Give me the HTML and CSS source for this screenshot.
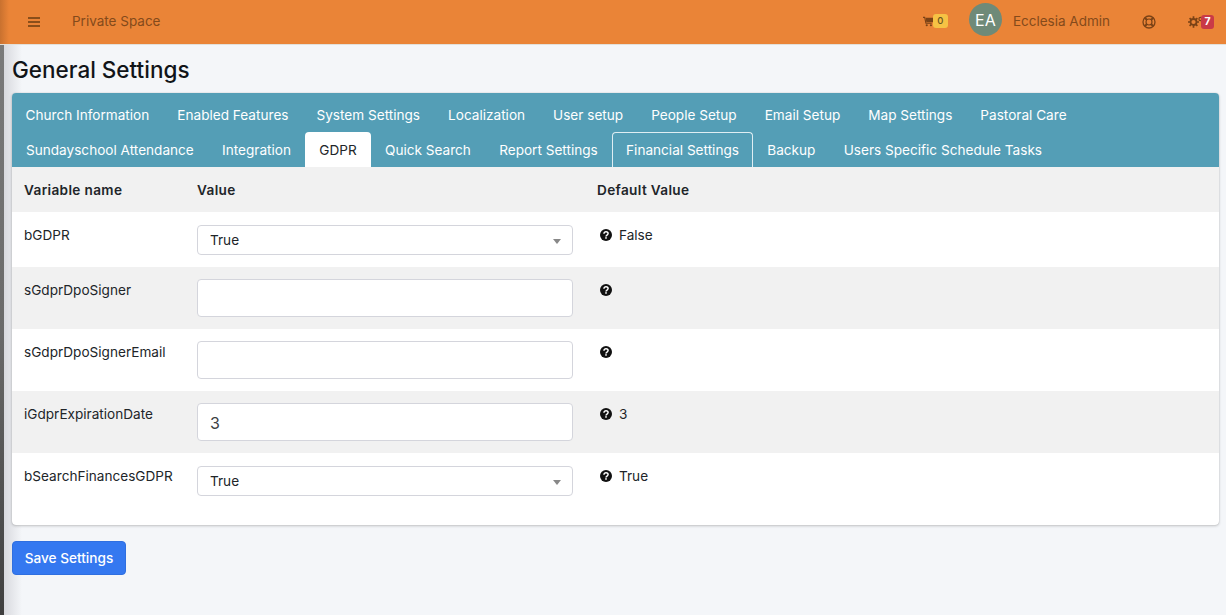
FILE: index.html
```html
<!DOCTYPE html>
<html lang="en">
<head>
<meta charset="utf-8">
<title>General Settings</title>
<link rel="stylesheet" href="styles.css">
</head>
<body>
<div class="sidebar-edge"></div>
<div class="page">
  <header class="topbar">
    <svg class="burger" viewBox="0 0 12 10" width="12" height="10"><path d="M0 1h12M0 5h12M0 9h12" stroke="#6b3d12" stroke-width="1.5"/></svg>
    <span class="space">Private Space</span>
    <div class="top-right">
      <span class="cart">
        <svg viewBox="0 0 12 12" width="10" height="11"><path d="M0 1h2l1.500 7h7" fill="none" stroke="#7a4216" stroke-width="1.300"/><path d="M3 1.500h9v5.500H4z" fill="#7a4216"/><circle cx="4.500" cy="10.500" r="1.300" fill="#7a4216"/><circle cx="9.500" cy="10.500" r="1.300" fill="#7a4216"/></svg>
        <span class="badge badge-yellow">0</span>
      </span>
      <span class="avatar">EA</span>
      <span class="user">Ecclesia Admin</span>
      <svg class="lifering" viewBox="0 0 14 14" width="14" height="14"><circle cx="7" cy="7" r="6" fill="none" stroke="#7a4216" stroke-width="1.300"/><circle cx="7" cy="7" r="3" fill="none" stroke="#7a4216" stroke-width="1.200"/><path d="M2.800 2.800l2.200 2.200M11.200 2.800L9 5M2.800 11.200L5 9M11.200 11.200L9 9" stroke="#7a4216" stroke-width="2"/></svg>
      <span class="gears">
        <svg viewBox="0 0 15 12" width="15" height="12"><circle cx="5.500" cy="6" r="3" fill="none" stroke="#7a4216" stroke-width="1.800"/><path d="M5.500 0.300v2M5.500 9.700v2M0 6h2M9 6h2M1.600 2.100l1.500 1.500M7.900 8.400l1.500 1.500M1.600 9.900l1.500-1.500M7.900 3.600l1.500-1.500" stroke="#7a4216" stroke-width="1.700"/><circle cx="12.500" cy="3" r="1.600" fill="none" stroke="#7a4216" stroke-width="1.200"/></svg>
        <span class="badge badge-red">7</span>
      </span>
    </div>
  </header>
  <main class="content">
    <h1 class="title">General Settings</h1>
    <section class="card">
      <nav class="tabs">
        <div class="tab-row first">
          <a class="tab">Church Information</a>
          <a class="tab">Enabled Features</a>
          <a class="tab">System Settings</a>
          <a class="tab">Localization</a>
          <a class="tab">User setup</a>
          <a class="tab">People Setup</a>
          <a class="tab">Email Setup</a>
          <a class="tab">Map Settings</a>
          <a class="tab">Pastoral Care</a>
        </div>
        <div class="tab-row second">
          <a class="tab">Sundayschool Attendance</a>
          <a class="tab">Integration</a>
          <a class="tab active">GDPR</a>
          <a class="tab">Quick Search</a>
          <a class="tab">Report Settings</a>
          <a class="tab outlined">Financial Settings</a>
          <a class="tab">Backup</a>
          <a class="tab">Users Specific Schedule Tasks</a>
        </div>
      </nav>
      <div class="row head">
        <div>Variable name</div>
        <div>Value</div>
        <div>Default Value</div>
      </div>
      <div class="row r-select">
        <div class="name">bGDPR</div>
        <div><div class="select">True<span class="caret"></span></div></div>
        <div class="def"><svg class="help"><use href="#q"/></svg>False</div>
      </div>
      <div class="row shaded r-input">
        <div class="name">sGdprDpoSigner</div>
        <div><div class="input"></div></div>
        <div class="def"><svg class="help"><use href="#q"/></svg></div>
      </div>
      <div class="row r-input">
        <div class="name">sGdprDpoSignerEmail</div>
        <div><div class="input"></div></div>
        <div class="def"><svg class="help"><use href="#q"/></svg></div>
      </div>
      <div class="row shaded r-input">
        <div class="name">iGdprExpirationDate</div>
        <div><div class="input">3</div></div>
        <div class="def"><svg class="help"><use href="#q"/></svg>3</div>
      </div>
      <div class="row r-select last">
        <div class="name">bSearchFinancesGDPR</div>
        <div><div class="select">True<span class="caret"></span></div></div>
        <div class="def"><svg class="help"><use href="#q"/></svg>True</div>
      </div>
    </section>
    <button class="save">Save Settings</button>
  </main>
</div>
<svg class="defs" width="0" height="0"><symbol id="q" viewBox="0 0 12 12"><circle cx="6" cy="6" r="6" fill="#111"/><path d="M4 4.700C4 3.500 4.900 2.800 6 2.800s2.100.7 2.100 1.800c0 1.500-2.100 1.500-2.100 2.800" fill="none" stroke="#fff" stroke-width="1.500"/><rect x="5.200" y="8.200" width="1.600" height="1.500" fill="#fff"/></symbol></svg>
</body>
</html>
```
FILE: styles.css
```css
* { box-sizing: border-box; }
html, body { margin: 0; height: 100%; }
body {
  width: 1226px;
  height: 615px;
  overflow: hidden;
  background: #f4f6f9;
  font-family: Inter, "Liberation Sans", sans-serif;
  font-size: 13.600px;
  color: #212529;
  position: relative;
}
.sidebar-edge {
  position: absolute;
  left: 0;
  top: 44px;
  bottom: 0;
  width: 22px;
  background:
    linear-gradient(90deg, rgba(0,0,0,0) 0, rgba(0,0,0,0) 4px, #d9dadf 4.500px, #f4f6f9 100%),
    linear-gradient(180deg, #7a7a7a 0, #6a6a6a 50%, #3f3f3f 100%);
}
.page { position: relative; }
.defs { position: absolute; }
.topbar {
  height: 45px;
  background: linear-gradient(90deg, #c9712f 0, #ea8437 9px);
  border-bottom: 1px solid #e2e0da;
  display: flex;
  align-items: center;
  padding-left: 28px;
  color: #844a1b;
}
.burger { margin-right: 32px; }
.space { font-size: 13.500px; padding-bottom: 2px; }
.top-right { margin-left: auto; display: flex; align-items: center; }
.cart { display: flex; align-items: center; margin: 0 21px 0 1px; padding-bottom: 2px; }
.badge {
  font-size: 9.500px;
  line-height: 14px;
  height: 14px;
  padding: 0 4.500px;
  border-radius: 3px;
  font-weight: 500;
}
.badge-yellow { background: #f6c244; color: #6b5520; }
.badge-red { background: #c93a47; color: #fff; font-size: 10.500px; font-weight: 700; position: absolute; left: 13px; top: 0; padding: 0 3.500px; }
.avatar {
  width: 33px;
  height: 33px;
  border-radius: 50%;
  background: #6f8a78;
  color: #fff;
  font-size: 16px;
  display: flex;
  align-items: center;
  justify-content: center;
  margin: 0 11px 5px 0;
}
.user { font-size: 13.500px; margin-right: 32px; padding-bottom: 2px; }
.lifering { margin: 0 32px 1px 0; }
.gears { position: relative; display: flex; width: 26px; margin: 0 12px 1px 0; height: 14px; align-items: center; }
.content { padding: 0 7px 0 12px; }
.title {
  margin: 0;
  padding-top: 10px;
  height: 48px;
  font-size: 22.500px;
  line-height: 29px;
  font-weight: 500;
  color: #111418;
}
.card {
  background: #fff;
  border-radius: 4px;
  box-shadow: 0 0 1px rgba(0,0,0,.25), 0 1px 3px rgba(0,0,0,.2);
  height: 432px;
  overflow: hidden;
}
.tabs {
  background: #549eb6;
  height: 74px;
  padding-top: 4px;
}
.tab-row { display: flex; height: 35px; }
.first { margin-left: -.5px; }
.second { gap: .3px; }
.tab {
  color: #fff;
  padding: 0 13px;
  line-height: 34px;
  height: 35px;
  border: 1px solid transparent;
  border-bottom: 0;
  border-radius: 4px 4px 0 0;
  white-space: nowrap;
}
.active { background: #fff; color: #212529; }
.outlined { border-color: #dfeef3; }
.row {
  display: grid;
  grid-template-columns: 173px 400px 1fr;
  padding-left: 12px;
}
.head { height: 45px; background: #f1f1f1; font-weight: 600; letter-spacing: .35px; align-items: center; }
.shaded { background: #f1f1f1; }
.r-select { height: 55px; padding-top: 12px; }
.r-input { height: 62px; padding-top: 12px; }
.last { height: 72px; }
.name { line-height: 22px; }
.select, .input {
  width: 376px;
  background: #fff;
  border: 1px solid #d4d5dc;
  border-radius: 4px;
  position: relative;
  padding-left: 12px;
}
.select { height: 30px; line-height: 29px; margin-top: 1px; }
.input { height: 38px; line-height: 38px; font-size: 16px; color: #3c4043; }
.caret {
  position: absolute;
  right: 11px;
  top: 13px;
  border: 4px solid transparent;
  border-top: 5px solid #888;
  border-bottom: 0;
}
.def { display: flex; align-items: center; height: 22px; line-height: 22px; padding-left: 3px; }
.help { width: 12px; height: 12px; margin-right: 7px; }
.save {
  display: block;
  margin-top: 16px;
  width: 114px;
  height: 34px;
  background: #3478f0;
  border: 1px solid #2f6fe0;
  border-radius: 4px;
  color: #fff;
  font: 500 13.600px Inter, "Liberation Sans", sans-serif;
}
```
